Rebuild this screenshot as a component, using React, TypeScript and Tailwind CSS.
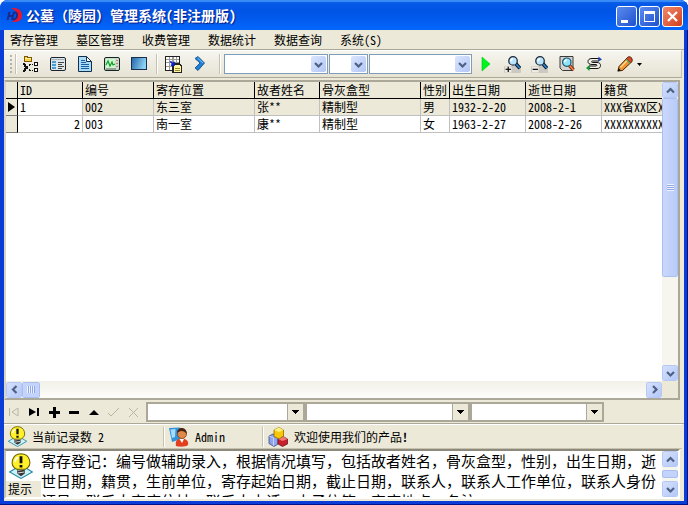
import React from "react";

const FONT =
  "font-['Noto_Sans_Mono_CJK_SC','Noto_Sans_CJK_SC',monospace]";

type Dir = "up" | "down" | "left" | "right";

function Chevron({ dir }: { dir: Dir }) {
  const d = {
    up: "M1 6.500 L4.500 3 L8 6.500",
    down: "M1 3 L4.500 6.500 L8 3",
    left: "M6.500 1 L3 4.500 L6.500 8",
    right: "M3 1 L6.500 4.500 L3 8",
  }[dir];
  return (
    <svg width="9" height="9" viewBox="0 0 9 9" fill="none" stroke="#4d6185" strokeWidth="2.200">
      <path d={d} />
    </svg>
  );
}

function ScrollButton({ dir, label }: { dir: Dir; label: string }) {
  return (
    <button
      type="button"
      aria-label={label}
      className="flex size-4 shrink-0 items-center justify-center rounded-xs border border-white bg-linear-to-br from-[#d5e0fd] to-[#b4c8f6] outline-1 -outline-offset-1 outline-[#b6c9f4]"
    >
      <Chevron dir={dir} />
    </button>
  );
}

function Combo({ label, width }: { label: string; width: string }) {
  return (
    <div className={`relative h-5 shrink-0 ${width}`}>
      <select
        aria-label={label}
        className="block size-full appearance-none border border-[#7f9db9] bg-white"
      />
      <span className="pointer-events-none absolute top-0.5 right-0.5 flex h-4 w-[15px] items-center justify-center rounded-xs bg-linear-to-br from-[#dbe5fe] to-[#b2c6f5]">
        <Chevron dir="down" />
      </span>
    </div>
  );
}

function FlatCombo({ label, width }: { label: string; width: string }) {
  return (
    <div className={`relative h-5 shrink-0 ${width}`}>
      <select
        aria-label={label}
        className="block size-full appearance-none border-2 border-[#aca899] bg-white"
      />
      <span className="pointer-events-none absolute top-0.5 right-0.5 flex h-4 w-4 items-center justify-center border-l border-[#aca899] bg-[#ece9d8]">
        <svg width="7" height="4" viewBox="0 0 7 4" shapeRendering="crispEdges">
          <path d="M0 0h7L3.500 4z" />
        </svg>
      </span>
    </div>
  );
}

function Icon({ children, size = 16 }: { children: React.ReactNode; size?: number }) {
  return (
    <svg width={size} height={size} viewBox="0 0 16 16" fill="none">
      {children}
    </svg>
  );
}

function ToolButton({ label, children }: { label: string; children: React.ReactNode }) {
  return (
    <button
      type="button"
      aria-label={label}
      className="flex h-6 w-[27px] shrink-0 items-center justify-center"
    >
      {children}
    </button>
  );
}

const TreeIcon = () => (
  <Icon>
    <g shapeRendering="crispEdges">
      <path d="M1 0h4v1h4v5H1z" fill="#7a5a00" />
      <path d="M2 1h2v1h4v3H2z" fill="#ffd23c" />
      <path d="M2 2h6v1H2z" fill="#fff3a8" />
      <path d="M0 7h2v1h1v2h2v3H3v2H2v1H0v-2h1v-2h1v-1H1V9H0z" fill="#111" />
      <path d="M6 8h1v2H6zM6 13h1v2H6zM7 8h1v1H7zM7 14h1v1H7zM9 8h1v1H9zM9 14h1v1H9z" fill="#111" />
      <path d="M11.500 6.500h3v3h-3zM11.500 12.500h3v3h-3z" fill="#fff" stroke="#111" />
    </g>
  </Icon>
);

const FormIcon = () => (
  <Icon>
    <rect x="0.500" y="1.500" width="15" height="13" rx="1.500" fill="#dfe5e8" stroke="#1b242c" />
    <path d="M1.500 3.500h13" stroke="#a0afba" />
    <rect x="2" y="5" width="4" height="8" fill="#4a9cd0" />
    <path d="M8 6.500h6M8 8.500h4M8 10.500h6M8 12.500h4" stroke="#444" />
    <path d="M2 7.500h4M2 10.500h4" stroke="#bfe2f6" />
  </Icon>
);

const DocIcon = () => (
  <Icon>
    <path d="M1.500 0.500h8l5 5v10h-13z" fill="#a9dcf5" stroke="#12304d" />
    <path d="M9.500 0.500v5h5z" fill="#fff" stroke="#12304d" />
    <path d="M4 4.500h4M4 6.500h5M4 8.500h8M4 10.500h8M4 12.500h8" stroke="#1b5fa5" />
  </Icon>
);

const ChartIcon = () => (
  <Icon>
    <rect x="0.500" y="1.500" width="15" height="13" rx="1.500" fill="#cfd8cf" stroke="#13281c" />
    <rect x="2" y="3" width="9" height="9" fill="#c9fac9" />
    <path d="M2 9l2-4 2 5 2-4 1 3 2-1" stroke="#159a2d" strokeWidth="1.200" />
    <path d="M13 4v1M13 7v1M13 10v1" stroke="#c03030" />
    <path d="M2 13h10" stroke="#666" />
  </Icon>
);

const ScreenIcon = () => (
  <Icon>
    <defs>
      <linearGradient id="screen" x1="0" y1="0" x2="1" y2="0.300">
        <stop offset="0" stopColor="#1f62a8" />
        <stop offset="1" stopColor="#8fd4f5" />
      </linearGradient>
    </defs>
    <rect x="0.500" y="1.500" width="15" height="12" fill="url(#screen)" stroke="#17304e" />
  </Icon>
);

const GridDocIcon = () => (
  <Icon size={17}>
    <g shapeRendering="crispEdges">
      <rect x="0.500" y="0.500" width="13" height="13" fill="#fff" stroke="#222" />
      <path d="M1 3.500h12M1 6.500h12M1 9.500h12M4.500 1v12M7.500 1v12M10.500 1v12" stroke="#9a9a9a" />
      <path d="M7.500 7.500h6l2 2v6h-8z" fill="#fff6a5" stroke="#222" />
      <path d="M9 11.500h5M9 13.500h5" stroke="#988b30" />
    </g>
    <path d="M5 5l3 3M8.500 5.500v3h-3" stroke="#0a23c8" strokeWidth="1.600" />
  </Icon>
);

const ForwardIcon = () => (
  <Icon>
    <path d="M2 2.500l3-2 6.500 6.500L5 14.500l-3-2.500L7 7z" fill="#1c7fd8" stroke="#0c4580" strokeWidth="0.800" />
    <path d="M4.500 2l5.500 5" stroke="#7cc2ff" />
  </Icon>
);

const PlayIcon = () => (
  <Icon>
    <path d="M4 1l8 7-8 7z" fill="#00f51c" stroke="#00c414" strokeWidth="0.600" />
  </Icon>
);

function ZoomIcon({ plus }: { plus?: boolean }) {
  return (
    <Icon size={17}>
      <rect x="0" y="9.500" width="16" height="6.500" rx="1" fill="#cbc9c1" />
      <rect x="1" y="10" width="6" height="5.500" fill="#eeece4" />
      <path d="M1.500 12.500h5" stroke="#111" strokeWidth="1.200" />
      {plus && <path d="M4 10v5" stroke="#111" strokeWidth="1.200" />}
      <path d="M11 7l4 4.500" stroke="#0a1c30" strokeWidth="3.400" />
      <path d="M11 7l3.700 4.200" stroke="#2f8fe0" strokeWidth="1.400" />
      <circle cx="8.500" cy="4.600" r="4" fill="#b9e4fb" stroke="#1b2a3c" strokeWidth="1.200" />
      <path d="M6.300 5a2.200 2.200 0 0 1 2.200-2.200" stroke="#fff" strokeWidth="1.500" />
    </Icon>
  );
}

const PreviewIcon = () => (
  <Icon>
    <path d="M1 0.500h13v14H3.500L1 12z" fill="#d4d4d0" stroke="#3a3a3a" />
    <path d="M10 9l4.500 5" stroke="#7a2a10" strokeWidth="3.400" />
    <path d="M10 9l4.500 5" stroke="#f08048" strokeWidth="1.700" />
    <circle cx="7.800" cy="6.200" r="4.200" fill="#8fe4f7" stroke="#1b5674" strokeWidth="1.200" />
    <path d="M5.500 6.200a2.300 2.300 0 0 1 2.300-2.300" stroke="#fff" strokeWidth="1.500" />
  </Icon>
);

const SwapIcon = () => (
  <Icon>
    <path
      d="M13 2.500H6C3 2.500 2 4 2 5.500S3 8.500 6 8.500h4c1.200 0 1.200 1.500 0 1.500H3v2.500h8c2.500 0 3.500-1.300 3.500-3s-1-3-3.500-3H6.500c-1.200 0-1.200-1.500 0-1.500H13z"
      fill="#f4f2e8"
      stroke="#111"
    />
    <path d="M12.500 0.500l3.500 3-3.500 2z" fill="#2848c0" />
    <path d="M3.500 9l-3.500 3 3.500 3z" fill="#149a30" />
  </Icon>
);

const PencilIcon = () => (
  <Icon>
    <path d="M1 15l1-4.500 9-9.500h2.500L15 3v2.500l-9.500 9z" fill="#f0902c" stroke="#4a2505" />
    <path d="M3.500 11.500L11 3.500" stroke="#ffd88a" strokeWidth="1.500" />
    <path d="M11 1h2.500L15 3v2.500l-1.500 1-4-4z" fill="#e0442a" stroke="#4a2505" strokeWidth="0.600" />
    <path d="M9 3.300l4 4" stroke="#4da85a" strokeWidth="1.200" />
    <path d="M0.500 15.500l1-3.500 2.500 2.500z" fill="#111" />
  </Icon>
);

function BulbIcon({ size }: { size: number }) {
  return (
    <svg width={size} height={size} viewBox="0 0 22 24" fill="none">
      <path d="M0.500 17.500L11 11l10.500 6.500-10.500 6z" fill="#c9f2fa" stroke="#2a8aa0" />
      <path d="M7.500 14h7v5l-3.500 2.500L7.500 19z" fill="#333" />
      <path d="M8 16l6-1M8 18.500l6-1" stroke="#ddd" />
      <path d="M11 0.700a8.500 7.700 0 0 1 4 14.300h-8a8.500 7.700 0 0 1 4-14.300z" fill="#fff02a" stroke="#6b6200" />
      <path d="M5.500 8a5 5 0 0 1 3-4" stroke="#fff" strokeWidth="1.500" />
      <path d="M11 3v6.500" stroke="#111" strokeWidth="2.600" />
      <path d="M11 11v2.400" stroke="#111" strokeWidth="2.600" />
    </svg>
  );
}

const UserIcon = () => (
  <svg width="20" height="20" viewBox="0 0 20 20" fill="none">
    <path d="M0 1l11-.500v12L3 15z" fill="#2f94dc" />
    <path d="M1.500 2.500l5-.500-.500 8-3 1z" fill="#a6dcfa" />
    <path d="M7 19c-1-5 1-7.500 5.500-7.500S20 14 19 18c-2 2-9 2-12 1z" fill="#e2401c" />
    <path d="M10.500 12l2.500 4 2-4z" fill="#fff" />
    <circle cx="13" cy="7" r="4.500" fill="#e08a48" stroke="#7a3010" strokeWidth="0.700" />
    <path d="M8 6c0-4 3-5.500 5.500-5S18.500 4 17.500 7c-1-2-3-3-5-3s-3 1-4.500 2z" fill="#4c2410" />
  </svg>
);

const CubesIcon = () => (
  <svg width="20" height="20" viewBox="0 0 20 20" fill="none" strokeWidth="0.700">
    <path d="M1 9l4-2 5 2v8l-4 2.500L1 16.500z" fill="#8fa4ea" stroke="#27357c" />
    <path d="M1 9l4.500 2V19" stroke="#dbe3ff" />
    <path d="M10 12l5-2.500L19.500 12v5L14.500 19.500 10 17z" fill="#c8202c" stroke="#5c0a10" />
    <path d="M10 12l4.500 2 5-2-4.500-2.500z" fill="#f07878" />
    <path d="M6 3l5-2.500L15.500 3v6L11 12 6 9.500z" fill="#f8c808" stroke="#7c5c00" />
    <path d="M6 3l5 2 4.500-2L11 .500z" fill="#fff07a" />
  </svg>
);

const LogoIcon = () => (
  <svg width="17" height="17" viewBox="0 0 17 17" fill="none">
    <path d="M5 1.500C11 0 16 3 16 8.500S11 16 5 14.500c4-.500 6-3 6-6S9 2.500 5 1.500z" fill="#e8152c" />
    <path d="M3.500 5L1.500 13M8 5l-2 8M3 9h4.500M8.500 5.500c4-.500 3.500 6.500-1.500 7" stroke="#1a2a86" strokeWidth="1.800" />
  </svg>
);

const menus = ["寄存管理", "墓区管理", "收费管理", "数据统计", "数据查询", "系统(S)"];

const columns = [
  { title: "ID", width: "w-[65px]" },
  { title: "编号", width: "w-[71px]" },
  { title: "寄存位置", width: "w-[101px]" },
  { title: "故者姓名", width: "w-[65px]" },
  { title: "骨灰盒型", width: "w-[101px]" },
  { title: "性别", width: "w-[29px]" },
  { title: "出生日期", width: "w-[76px]" },
  { title: "逝世日期", width: "w-[76px]" },
  { title: "籍贯", width: "w-auto" },
];

const rows = [
  ["1", "002", "东三室", "张**", "精制型", "男", "1932-2-20", "2008-2-1", "XXX省XX区X"],
  ["2", "003", "南一室", "康**", "精制型", "女", "1963-2-27", "2008-2-26", "XXXXXXXXXX"],
];

const navigator = [
  { label: "第一条", d: "M2.500 3v8M11 3v8L5 7z", off: true },
  { label: "最后一条", d: "M2 3v8L9 7zM10 3h2v8h-2z" },
  { label: "添加", d: "M6 2h3v4h4v3H9v4H6V9H2V6h4z" },
  { label: "删除", d: "M2 6h10v3H2z" },
  { label: "编辑", d: "M2 10l5-5 5 5z" },
  { label: "保存", d: "M1 8l3 3 8-8", off: true },
  { label: "取消", d: "M2 3l9 9M11 3l-9 9", off: true },
];

const hint =
  "寄存登记：编号做辅助录入，根据情况填写，包括故者姓名，骨灰盒型，性别，出生日期，逝世日期，籍贯，生前单位，寄存起始日期，截止日期，联系人，联系人工作单位，联系人身份证号，联系人家庭住址，联系人电话，电子信箱，家庭地点，备注。";

function Separator() {
  return <span className="h-5 w-0.5 shrink-0 border-l border-[#c5c2b2] bg-white" />;
}

export default function App() {
  return (
    <div
      className={`flex h-screen flex-col overflow-hidden rounded-t-lg bg-[#0a3cd8] text-xs leading-4 text-black shadow-[inset_-1px_-1px_0_#00138c] ${FONT}`}
    >
      <header className="flex h-[30px] shrink-0 items-center bg-linear-to-b from-[#0a5ce8] via-[#0054e6] via-40% to-[#0566fb] pr-[5px] pl-[6px] shadow-[inset_0_2px_1px_#3c8cf8]">
        <LogoIcon />
        <h1 className="ml-[3px] flex-1 text-sm leading-5 font-bold text-white [text-shadow:1px_1px_1px_#0a1883]">
          公墓（陵园）管理系统(非注册版)
        </h1>
        <div className="mt-0.5 flex gap-0.5">
          <button type="button" aria-label="最小化" className="size-[21px] rounded-[3px] border border-white bg-linear-to-br from-[#5b8bf0] to-[#1f50cc]">
            <svg width="19" height="19" viewBox="0 0 19 19"><path d="M4 13h7v3H4z" fill="#fff" /></svg>
          </button>
          <button type="button" aria-label="最大化" className="size-[21px] rounded-[3px] border border-white bg-linear-to-br from-[#5b8bf0] to-[#1f50cc]">
            <svg width="19" height="19" viewBox="0 0 19 19"><path d="M4 4h11v11H4zM5 7v7h9V7z" fill="#fff" fillRule="evenodd" /></svg>
          </button>
          <button type="button" aria-label="关闭" className="size-[21px] rounded-[3px] border border-white bg-linear-to-br from-[#f0886c] to-[#d23c10]">
            <svg width="19" height="19" viewBox="0 0 19 19"><path d="M5 5l9 9M14 5l-9 9" stroke="#fff" strokeWidth="2.200" /></svg>
          </button>
        </div>
      </header>

      <div className="mx-1 mb-1 flex min-h-0 flex-1 flex-col bg-[#ece9d8]">
        <nav className="flex h-5 shrink-0 items-center gap-[18px] border-b border-[#aca899] pl-1.5">
          {menus.map((m) => (
            <button key={m} type="button" className="whitespace-nowrap">
              {m}
            </button>
          ))}
        </nav>

        <div className="mr-0.5 flex h-7 shrink-0 items-center border-y border-r border-t-white border-r-[#c5c2b2] border-b-[#aca899] bg-linear-to-b from-[#f6f5ef] to-[#e6e3d3]">
          <span className="mr-[3px] ml-1.5 h-[18px] w-0.5 shrink-0 bg-[repeating-linear-gradient(#b5b2a5_0_2px,transparent_2px_4px)]" />
          <Separator />
          <ToolButton label="目录"><TreeIcon /></ToolButton>
          <ToolButton label="登记"><FormIcon /></ToolButton>
          <ToolButton label="文档"><DocIcon /></ToolButton>
          <ToolButton label="图表"><ChartIcon /></ToolButton>
          <ToolButton label="屏幕"><ScreenIcon /></ToolButton>
          <span className="mr-0.5 ml-1 flex"><Separator /></span>
          <ToolButton label="导出"><GridDocIcon /></ToolButton>
          <ToolButton label="前进"><ForwardIcon /></ToolButton>
          <span className="mr-[3px] ml-[5px] flex"><Separator /></span>
          <div className="flex shrink-0 gap-px">
            <Combo label="查询字段" width="w-[104px]" />
            <Combo label="条件" width="w-[39px]" />
            <Combo label="查询内容" width="w-[103px]" />
          </div>
          <ToolButton label="执行"><PlayIcon /></ToolButton>
          <ToolButton label="放大"><ZoomIcon plus /></ToolButton>
          <ToolButton label="缩小"><ZoomIcon /></ToolButton>
          <ToolButton label="预览"><PreviewIcon /></ToolButton>
          <ToolButton label="切换"><SwapIcon /></ToolButton>
          <button type="button" aria-label="编辑" className="ml-1.5 flex h-6 shrink-0 items-center gap-1 px-1">
            <PencilIcon />
            <svg width="5" height="3" viewBox="0 0 5 3"><path d="M0 0h5L2.500 3z" /></svg>
          </button>
        </div>

        <main className="mt-0.5 mr-1 flex min-h-0 flex-1 flex-col border-2 border-y-[#aca899] border-r-[#aca899] border-l-[#d8d5c6] bg-white">
          <div className="flex min-h-0 flex-1">
            <div className="min-w-0 flex-1 overflow-hidden">
              <table className="w-full table-fixed border-separate border-spacing-0 text-left">
                <thead>
                  <tr className="h-[17px] bg-[#ece9d8]">
                    <th aria-label="当前行" className="w-3 border-r border-b border-black p-0" />
                    {columns.map((c) => (
                      <th
                        key={c.title}
                        scope="col"
                        className={`overflow-hidden border-r border-b border-black p-0 pl-0.5 font-normal whitespace-nowrap last:border-r-0 ${c.width}`}
                      >
                        {c.title}
                      </th>
                    ))}
                  </tr>
                </thead>
                <tbody>
                  {rows.map((row, r) => (
                    <tr key={row[0]} className={r === 0 ? "h-[17px] bg-[#ece9d8]" : "h-[17px]"}>
                      <td className="border-r border-b border-r-black border-b-[#808080] bg-[#ece9d8] p-0">
                        {r === 0 && (
                          <svg className="ml-0.5" width="7" height="10" viewBox="0 0 7 10">
                            <path d="M0 0l7 5-7 5z" />
                          </svg>
                        )}
                      </td>
                      {row.map((cell, c) => (
                        <td
                          key={c}
                          className={`overflow-hidden border-r border-b border-[#c0c0c0] p-0 pl-0.5 text-clip whitespace-nowrap last:border-r-0 ${
                            c === 0 ? (r === 0 ? "bg-white" : "pr-0.5 text-right") : ""
                          }`}
                        >
                          {cell}
                        </td>
                      ))}
                    </tr>
                  ))}
                </tbody>
              </table>
            </div>
            <div className="flex w-4 shrink-0 flex-col bg-[#f6f5ee]">
              <ScrollButton dir="up" label="向上滚动" />
              <div className="flex flex-1 flex-col">
                <div className="flex flex-2 items-center justify-center rounded-xs border border-white bg-linear-to-r from-[#cbd8fd] to-[#b9cbf8] outline-1 -outline-offset-1 outline-[#a9bfee]">
                  <span className="h-[7px] w-[7px] bg-[repeating-linear-gradient(#eef3ff_0_1px,#8da8e4_1px_2px)]" />
                </div>
                <div className="flex-1" />
              </div>
              <ScrollButton dir="down" label="向下滚动" />
            </div>
          </div>
          <div className="flex h-[17px] shrink-0 items-center bg-linear-to-b from-[#f1f0e8] to-[#fdfdfb]">
            <ScrollButton dir="left" label="向左滚动" />
            <div className="flex h-4 w-[18px] items-center justify-center rounded-xs border border-white bg-[#c3d3fc] outline-1 -outline-offset-1 outline-[#a9bfee]">
              <span className="h-[7px] w-2 bg-[repeating-linear-gradient(90deg,#eef3ff_0_1px,#8da8e4_1px_2px)]" />
            </div>
            <div className="flex-1" />
            <ScrollButton dir="right" label="向右滚动" />
            <span className="h-full w-4 bg-[#ece9d8]" />
          </div>
        </main>

        <div className="flex h-6 shrink-0 items-center border-b border-[#aca899]">
          <div className="mr-0.5 flex shrink-0">
            {navigator.map((n) => (
              <button
                key={n.label}
                type="button"
                aria-label={n.label}
                disabled={n.off}
                className="flex h-5 w-5 items-center justify-center"
              >
                <svg
                  width="14"
                  height="14"
                  viewBox="0 0 14 14"
                  fill={n.off ? "none" : "#000"}
                  stroke={n.off ? "#b9b6a6" : "none"}
                >
                  <path d={n.d} />
                </svg>
              </button>
            ))}
          </div>
          <FlatCombo label="选择一" width="w-[159px]" />
          <FlatCombo label="选择二" width="w-[165px]" />
          <FlatCombo label="选择三" width="w-[134px]" />
        </div>

        <footer className="mr-0.5 flex h-[25px] shrink-0 items-center border-y border-t-white border-b-[#c5c2b2]">
          <div className="flex w-[159px] shrink-0 items-center gap-1 pl-[3px]">
            <BulbIcon size={21} />
            <span>当前记录数 2</span>
          </div>
          <Separator />
          <div className="flex w-[97px] shrink-0 items-center gap-1.5 pl-1">
            <UserIcon />
            <span>Admin</span>
          </div>
          <Separator />
          <div className="flex items-center gap-1.5 pl-1">
            <CubesIcon />
            <span>
              欢迎使用我们的产品<b>!</b>
            </span>
          </div>
        </footer>

        <section className="mr-1 mb-0.5 flex h-[50px] shrink-0 border-2 border-y-[#8d8a7c] border-r-white border-b-white border-l-[#c5c2b2] bg-white">
          <div className="flex w-[35px] shrink-0 flex-col items-start justify-between">
            <span className="pt-0.5 pl-0.5"><BulbIcon size={26} /></span>
            <label htmlFor="hint" className="w-full bg-[#ece9d8] pl-0.5">
              提示
            </label>
          </div>
          <textarea
            id="hint"
            readOnly
            value={hint}
            className="min-w-0 flex-1 resize-none overflow-hidden text-[15px] leading-5 outline-none"
          />
          <div className="flex w-4 shrink-0 flex-col justify-between bg-[#f6f5ee]">
            <ScrollButton dir="up" label="提示向上滚动" />
            <span className="h-2 rounded-xs border border-[#a9bfee] bg-[#c3d3fc]" />
            <ScrollButton dir="down" label="提示向下滚动" />
          </div>
        </section>
      </div>
    </div>
  );
}
